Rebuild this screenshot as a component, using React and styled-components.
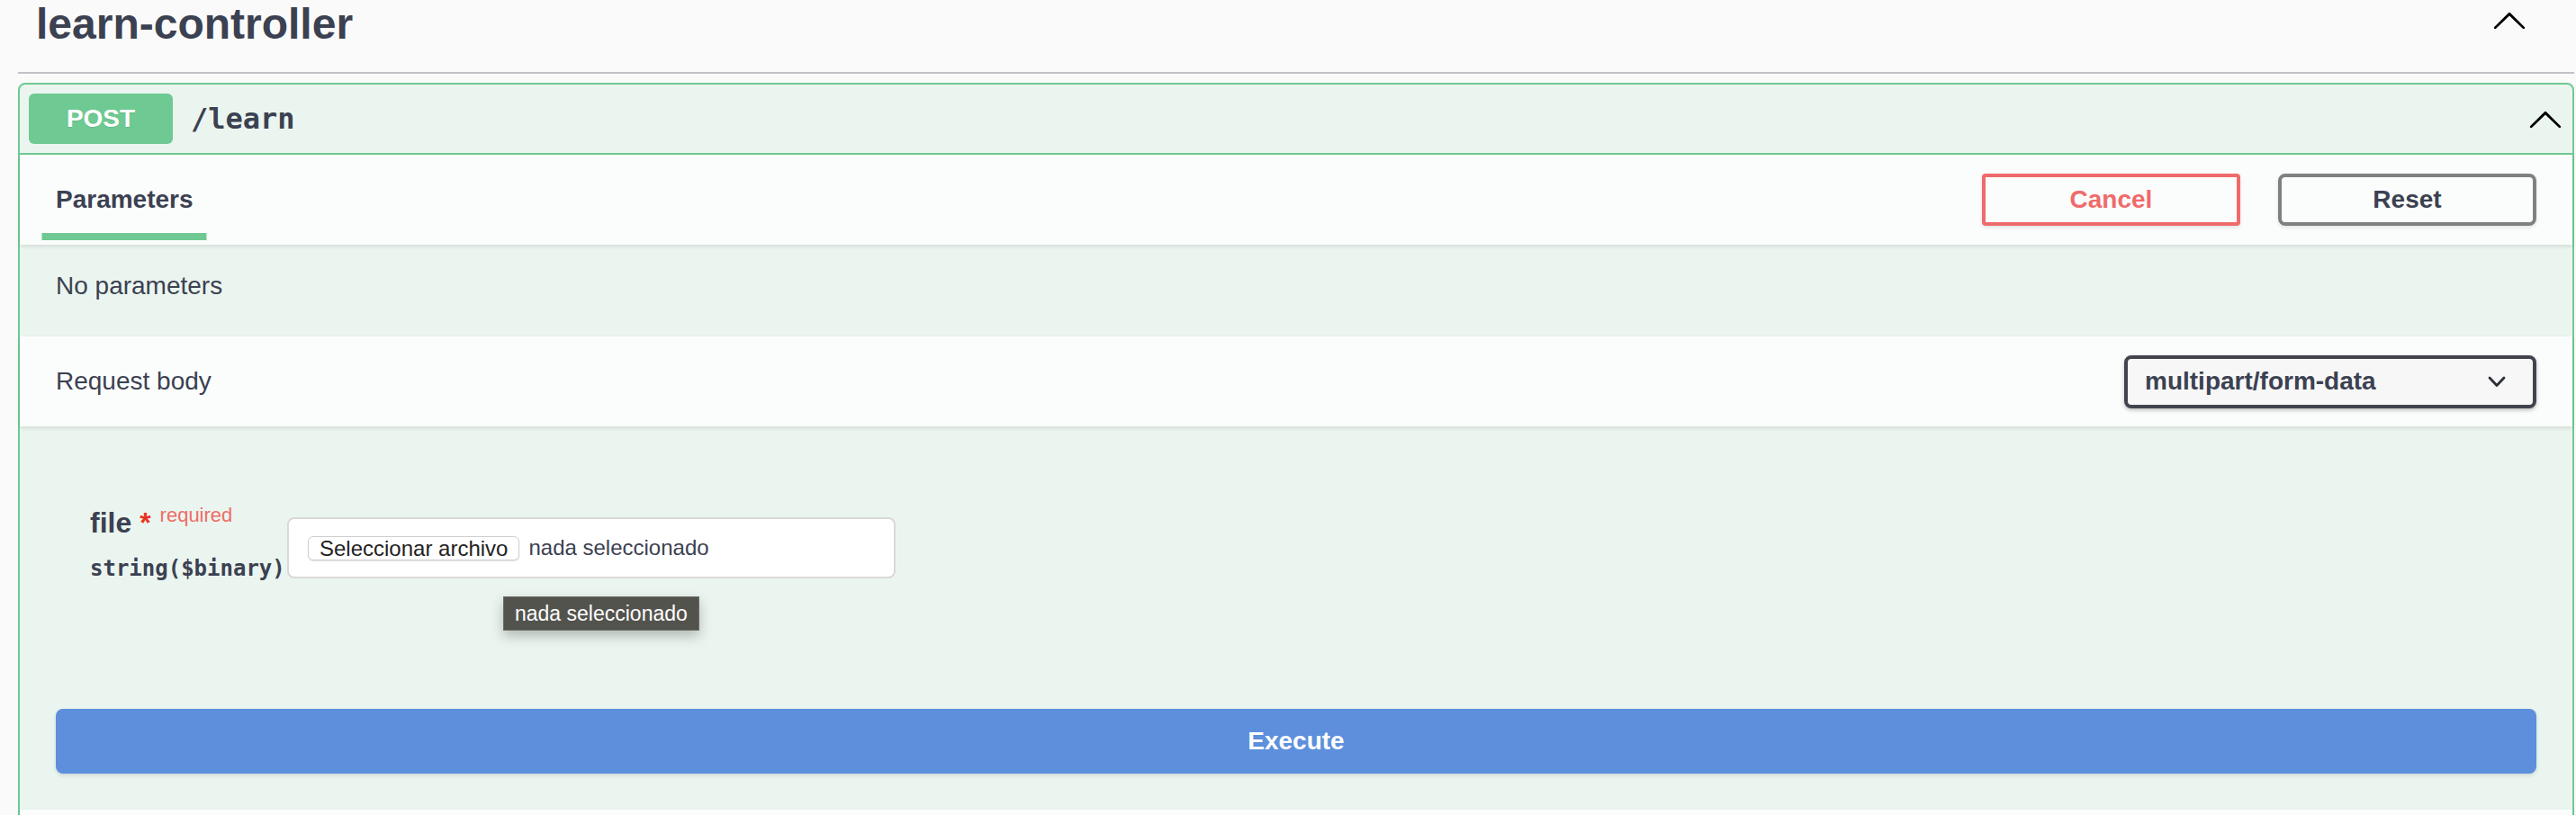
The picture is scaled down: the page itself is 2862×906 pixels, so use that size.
import React from "react";
import styled, { createGlobalStyle } from "styled-components";

const GlobalStyle = createGlobalStyle`
  html, body {
    margin: 0;
    padding: 0;
    background: #fafafa;
  }
  body {
    font-family: "Liberation Sans", Arial, sans-serif;
    color: #3b4151;
  }
`;

const GREEN = "#6fc992";
const TEXT = "#3b4151";
const MONO = `"DejaVu Sans Mono", "Liberation Mono", monospace`;

const Page = styled.div`
  padding: 0 2px 0 20px;
  min-height: 906px;
  box-sizing: border-box;
`;

const TagHeader = styled.div`
  display: flex;
  align-items: flex-start;
  justify-content: space-between;
  padding: 0 52px 26px 20px;
  border-bottom: 2px solid rgba(59, 65, 81, 0.3);
`;

const TagTitle = styled.h3`
  margin: 0;
  font-size: 48px;
  line-height: 54px;
  font-weight: 700;
  color: ${TEXT};
`;

const IconButton = styled.button`
  display: flex;
  border: none;
  background: transparent;
  padding: 0;
  margin-top: ${(p) => p.$top || 0}px;
  cursor: pointer;
`;

const Opblock = styled.div`
  margin-top: 10px;
  border: 2px solid ${GREEN};
  border-radius: 8px;
  background: #ebf5ef;
`;

const Summary = styled.div`
  display: flex;
  align-items: center;
  padding: 10px;
  border-bottom: 2px solid ${GREEN};
`;

const Method = styled.span`
  min-width: 160px;
  padding: 12px 0;
  line-height: 32px;
  font-size: 28px;
  font-weight: 700;
  color: #fff;
  background: ${GREEN};
  border-radius: 6px;
  text-align: center;
  text-shadow: 0 1px 0 rgba(0, 0, 0, 0.1);
`;

const Path = styled.span`
  flex: 1;
  padding: 0 20px;
  font-family: ${MONO};
  font-size: 32px;
  font-weight: 700;
  color: ${TEXT};
`;

const SectionHeader = styled.div`
  position: relative;
  display: flex;
  align-items: center;
  justify-content: space-between;
  height: 100px;
  padding: 0 40px;
  box-sizing: border-box;
  background: rgba(255, 255, 255, 0.8);
  box-shadow: 0 2px 4px rgba(0, 0, 0, 0.1);
`;

const TabTitle = styled.h4`
  margin: 0;
  font-size: 28px;
  font-weight: 700;
  color: ${TEXT};

  span {
    position: relative;
  }
  span::after {
    content: "";
    position: absolute;
    left: 50%;
    bottom: -30px;
    width: 120%;
    height: 8px;
    transform: translateX(-50%);
    background: ${GREEN};
  }
`;

const HeaderLabel = styled.span`
  font-size: 28px;
  font-weight: 400;
  color: ${TEXT};
`;

const ButtonGroup = styled.div`
  display: flex;
  gap: 42px;
`;

const OutlineButton = styled.button`
  width: 287px;
  height: 58px;
  box-sizing: border-box;
  background: transparent;
  border: 4px solid ${(p) => (p.$danger ? "#ef6b6b" : "#808080")};
  border-radius: ${(p) => (p.$danger ? "4px" : "8px")};
  color: ${(p) => (p.$danger ? "#ef6b6b" : TEXT)};
  font-family: "Liberation Sans", Arial, sans-serif;
  font-size: 28px;
  font-weight: 700;
  box-shadow: 0 2px 4px rgba(0, 0, 0, 0.1);
  cursor: pointer;
`;

const Description = styled.p`
  margin: 0;
  padding: 25px 40px 35px;
  font-size: 28px;
  line-height: 42px;
  color: ${TEXT};
`;

const Select = styled.div`
  display: flex;
  align-items: center;
  justify-content: space-between;
  width: 458px;
  height: 59px;
  box-sizing: border-box;
  padding: 0 30px 0 19px;
  border: 4px solid #41444e;
  border-radius: 8px;
  background: #f7f7f7;
  box-shadow: 0 2px 4px rgba(0, 0, 0, 0.25);
  font-size: 28px;
  font-weight: 700;
  color: ${TEXT};
`;

const Body = styled.div`
  padding: 87px 0 99px 78px;
`;

const ParamRow = styled.div`
  display: flex;
  align-items: flex-start;
`;

const ParamCol = styled.div`
  width: 219px;
`;

const ParamName = styled.div`
  font-size: 32px;
  line-height: 40px;
  font-weight: 700;
  color: ${TEXT};
  white-space: nowrap;
`;

const Star = styled.span`
  color: #eb3323;
`;

const Required = styled.span`
  position: relative;
  top: -12px;
  padding-left: 10px;
  font-size: 22px;
  font-weight: 400;
  color: #ee6d66;
`;

const ParamType = styled.div`
  padding-top: 10px;
  font-family: ${MONO};
  font-size: 24px;
  line-height: 34px;
  font-weight: 700;
  color: ${TEXT};
  white-space: nowrap;
`;

const FileField = styled.div`
  position: relative;
  display: flex;
  align-items: center;
  gap: 10px;
  width: 676px;
  height: 68px;
  margin-top: 14px;
  padding: 0 21px;
  box-sizing: border-box;
  border: 2px solid #d9d9d9;
  border-radius: 8px;
  background: #fff;
`;

const ChooseButton = styled.span`
  height: 27px;
  padding: 0 12px;
  box-sizing: border-box;
  border: 1px solid #cfcfcf;
  border-radius: 6px;
  background: #fff;
  box-shadow: 0 1px 1px rgba(0, 0, 0, 0.12);
  font-size: 24px;
  line-height: 25px;
  color: #222;
  white-space: nowrap;
`;

const FileText = styled.span`
  font-size: 24px;
  color: ${TEXT};
  white-space: nowrap;
`;

const Tooltip = styled.div`
  position: absolute;
  left: 238px;
  top: 86px;
  padding: 0 12px;
  border: 1px solid #6b6b66;
  background: #53534e;
  box-shadow: 0 6px 14px rgba(0, 0, 0, 0.25);
  color: #fff;
  font-size: 23px;
  line-height: 36px;
  white-space: nowrap;
`;

const ExecuteWrapper = styled.div`
  padding: 40px;
`;

const ExecuteButton = styled.button`
  display: block;
  width: 100%;
  height: 72px;
  border: none;
  border-radius: 8px;
  background: #5d8fdc;
  box-shadow: 0 2px 4px rgba(0, 0, 0, 0.12);
  color: #fff;
  font-family: "Liberation Sans", Arial, sans-serif;
  font-size: 28px;
  font-weight: 700;
  cursor: pointer;
`;

const ArrowUp = () => (
  <svg width="40" height="40" viewBox="0 0 20 20" fill="#000">
    <path d="M17.418 14.908c.272.268.709.268.979 0s.271-.701 0-.969l-7.908-7.83a.697.697 0 0 0-.979 0l-7.908 7.83c-.27.268-.27.701 0 .969.271.268.709.268.979 0L10 7.767l7.418 7.141z" />
  </svg>
);

const ArrowDown = () => (
  <svg width="20" height="13" viewBox="0 0 20 13">
    <polyline points="2,2 10,10.5 18,2" fill="none" stroke="#2b2f38" strokeWidth="2.8" strokeLinecap="round" strokeLinejoin="round" />
  </svg>
);

export default function App() {
  return (
    <Page>
      <GlobalStyle />
      <TagHeader>
        <TagTitle>learn-controller</TagTitle>
        <IconButton $top={2}>
          <ArrowUp />
        </IconButton>
      </TagHeader>

      <Opblock>
        <Summary>
          <Method>POST</Method>
          <Path>/learn</Path>
          <IconButton>
            <ArrowUp />
          </IconButton>
        </Summary>

        <SectionHeader>
          <TabTitle>
            <span>Parameters</span>
          </TabTitle>
          <ButtonGroup>
            <OutlineButton $danger>Cancel</OutlineButton>
            <OutlineButton>Reset</OutlineButton>
          </ButtonGroup>
        </SectionHeader>

        <Description>No parameters</Description>

        <SectionHeader>
          <HeaderLabel>Request body</HeaderLabel>
          <Select>
            <span>multipart/form-data</span>
            <ArrowDown />
          </Select>
        </SectionHeader>

        <Body>
          <ParamRow>
            <ParamCol>
              <ParamName>
                file<Star> *</Star>
                <Required>required</Required>
              </ParamName>
              <ParamType>string($binary)</ParamType>
            </ParamCol>
            <FileField>
              <ChooseButton>Seleccionar archivo</ChooseButton>
              <FileText>nada seleccionado</FileText>
              <Tooltip>nada seleccionado</Tooltip>
            </FileField>
          </ParamRow>
        </Body>

        <ExecuteWrapper>
          <ExecuteButton>Execute</ExecuteButton>
        </ExecuteWrapper>

        <SectionHeader />
      </Opblock>
    </Page>
  );
}
